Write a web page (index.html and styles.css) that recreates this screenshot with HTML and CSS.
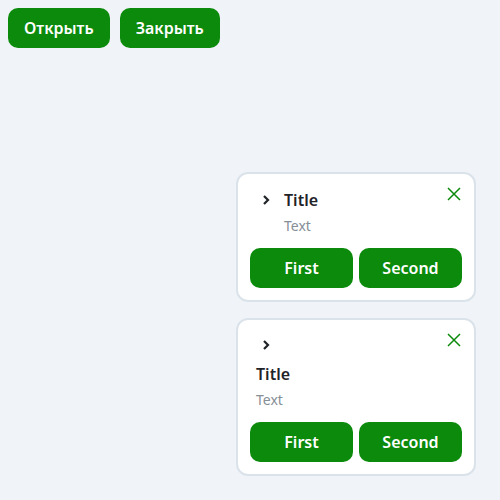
FILE: index.html
```html
<!DOCTYPE html>
<html lang="ru">
<head>
<meta charset="utf-8">
<link rel="stylesheet" href="styles.css">
</head>
<body>
<div class="toolbar">
  <button class="btn">Открыть</button>
  <button class="btn">Закрыть</button>
</div>

<div class="toasts">
  <div class="toast">
    <button class="close" aria-label="close">
      <svg width="14" height="14" viewBox="0 0 14 14"><path d="M1 1L13 13M13 1L1 13" stroke="#0b8a0b" stroke-width="1.5" fill="none"/></svg>
    </button>
    <div class="body row">
      <span class="icon"><svg width="12" height="12" viewBox="0 0 12 12"><path d="M4 2L8 6L4 10" stroke="#1f2328" stroke-width="2.2" fill="none"/></svg></span>
      <div class="content">
        <div class="title">Title</div>
        <div class="text">Text</div>
      </div>
    </div>
    <div class="actions">
      <button class="btn btn-wide">First</button>
      <button class="btn btn-wide">Second</button>
    </div>
  </div>

  <div class="toast">
    <button class="close" aria-label="close">
      <svg width="14" height="14" viewBox="0 0 14 14"><path d="M1 1L13 13M13 1L1 13" stroke="#0b8a0b" stroke-width="1.5" fill="none"/></svg>
    </button>
    <div class="body col">
      <span class="icon"><svg width="12" height="12" viewBox="0 0 12 12"><path d="M4 2L8 6L4 10" stroke="#1f2328" stroke-width="2.2" fill="none"/></svg></span>
      <div class="content">
        <div class="title">Title</div>
        <div class="text">Text</div>
      </div>
    </div>
    <div class="actions">
      <button class="btn btn-wide">First</button>
      <button class="btn btn-wide">Second</button>
    </div>
  </div>
</div>
</body>
</html>
```
FILE: styles.css
```css
html, body {
  margin: 0;
  padding: 0;
}
body {
  background: #f0f4f8;
  font-family: "Noto Sans", sans-serif;
  padding: 8px;
  height: 484px;
}
.toolbar {
  display: flex;
  gap: 10px;
}
.btn {
  height: 40px;
  padding: 0 16px;
  border: none;
  border-radius: 10px;
  background: #0b8a0b;
  color: #fff;
  font-family: "Noto Sans", sans-serif;
  font-weight: 600;
  font-size: 16px;
  cursor: pointer;
}
.toasts {
  position: fixed;
  right: 24px;
  bottom: 24px;
  width: 240px;
  display: flex;
  flex-direction: column;
  gap: 16px;
}
.toast {
  position: relative;
  background: #fff;
  border: 2px solid #dbe3ea;
  border-radius: 12px;
  padding: 12px;
}
.close {
  position: absolute;
  top: 8px;
  right: 8px;
  width: 24px;
  height: 24px;
  padding: 0;
  border: none;
  background: transparent;
  display: flex;
  align-items: center;
  justify-content: center;
}
.body {
  padding: 3px 6px 0;
  display: flex;
}
.body.row {
  gap: 8px;
}
.body.col {
  flex-direction: column;
  gap: 8px;
}
.icon {
  width: 20px;
  height: 20px;
  display: flex;
  align-items: center;
  justify-content: center;
}
.row .icon {
  margin-top: 1px;
}
.title {
  font-size: 16px;
  font-weight: 600;
  color: #1f2328;
  line-height: 22px;
}
.text {
  margin-top: 5px;
  font-size: 14px;
  color: #868e96;
  line-height: 20px;
}
.actions {
  margin-top: 12px;
  display: flex;
  gap: 6px;
}
.btn-wide {
  flex: 1;
  padding: 0;
}
```
